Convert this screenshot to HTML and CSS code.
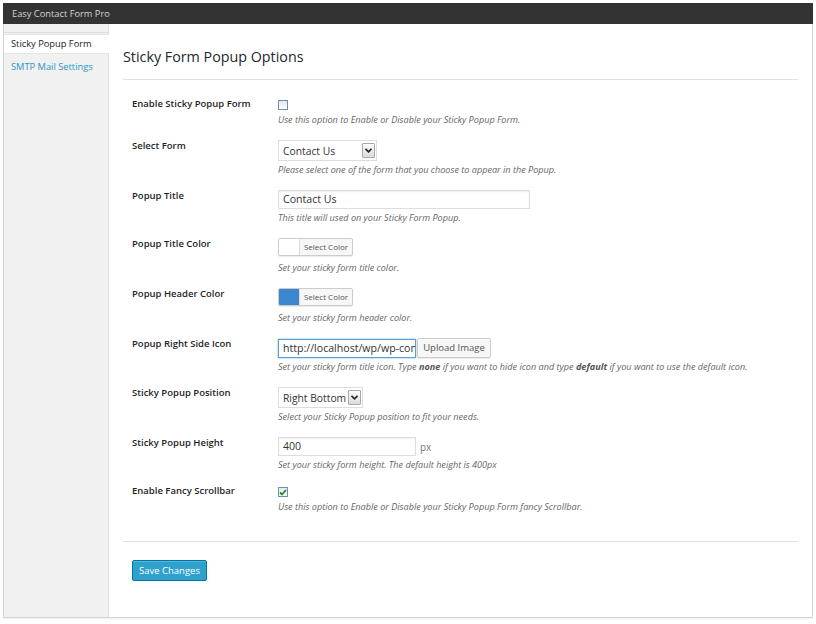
FILE: index.html
```html
<!DOCTYPE html>
<html>
<head>
<meta charset="utf-8">
<link rel="stylesheet" href="styles.css">
</head>
<body>
<div class="frame">
  <header class="topbar">Easy Contact Form Pro</header>
  <div class="layout">
    <nav class="sidebar">
      <div class="tab-spacer"></div>
      <a class="tab active">Sticky Popup Form</a>
      <a class="tab link">SMTP Mail Settings</a>
    </nav>
    <main class="content">
      <h1 class="title">Sticky Form Popup Options</h1>
      <hr class="rule rule-top">

      <div class="row">
        <div class="label">Enable Sticky Popup Form</div>
        <div class="field">
          <div class="check-wrap"><span class="checkbox"></span></div>
          <p class="desc desc-check">Use this option to Enable or Disable your Sticky Popup Form.</p>
        </div>
      </div>

      <div class="row">
        <div class="label">Select Form</div>
        <div class="field">
          <div class="select select-form"><span class="select-text">Contact Us</span><span class="select-arrow"><svg width="7" height="5" viewBox="0 0 7 5"><path d="M0.5 0.8 L3.5 3.8 L6.5 0.8" fill="none" stroke="#222" stroke-width="1.6"/></svg></span></div>
          <p class="desc desc-select">Please select one of the form that you choose to appear in the Popup.</p>
        </div>
      </div>

      <div class="row">
        <div class="label">Popup Title</div>
        <div class="field">
          <div class="input input-wide">Contact Us</div>
          <p class="desc">This title will used on your Sticky Form Popup.</p>
        </div>
      </div>

      <div class="row">
        <div class="label">Popup Title Color</div>
        <div class="field">
          <div class="colorpick"><span class="swatch swatch-white"></span><span class="colorpick-btn">Select Color</span></div>
          <p class="desc desc-color">Set your sticky form title color.</p>
        </div>
      </div>

      <div class="row">
        <div class="label">Popup Header Color</div>
        <div class="field">
          <div class="colorpick"><span class="swatch swatch-blue"></span><span class="colorpick-btn">Select Color</span></div>
          <p class="desc desc-color">Set your sticky form header color.</p>
        </div>
      </div>

      <div class="row">
        <div class="label">Popup Right Side Icon</div>
        <div class="field">
          <div class="inline">
            <div class="input input-mid focused">http://localhost/wp/wp-con</div>
            <span class="button">Upload Image</span>
          </div>
          <p class="desc">Set your sticky form title icon. Type <b>none</b> if you want to hide icon and type <b>default</b> if you want to use the default icon.</p>
        </div>
      </div>

      <div class="row">
        <div class="label">Sticky Popup Position</div>
        <div class="field">
          <div class="select select-pos"><span class="select-text">Right Bottom</span><span class="select-arrow"><svg width="7" height="5" viewBox="0 0 7 5"><path d="M0.5 0.8 L3.5 3.8 L6.5 0.8" fill="none" stroke="#222" stroke-width="1.6"/></svg></span></div>
          <p class="desc desc-select">Select your Sticky Popup position to fit your needs.</p>
        </div>
      </div>

      <div class="row">
        <div class="label">Sticky Popup Height</div>
        <div class="field">
          <div class="inline">
            <div class="input input-mid">400</div>
            <span class="unit">px</span>
          </div>
          <p class="desc">Set your sticky form height. The default height is 400px</p>
        </div>
      </div>

      <div class="row">
        <div class="label">Enable Fancy Scrollbar</div>
        <div class="field">
          <div class="check-wrap"><span class="checkbox checked"><svg width="8" height="7" viewBox="0 0 8 7"><path d="M1 3.5 L3 5.5 L7 1" fill="none" stroke="#1e8e1e" stroke-width="1.8"/></svg></span></div>
          <p class="desc desc-check">Use this option to Enable or Disable your Sticky Popup Form fancy Scrollbar.</p>
        </div>
      </div>

      <hr class="rule rule-bottom">
      <div class="actions"><span class="primary">Save Changes</span></div>
    </main>
  </div>
</div>
</body>
</html>
```

FILE: styles.css
```css
* { box-sizing: border-box; }
html, body { margin: 0; padding: 0; background: #fff; }
body { font-family: "Open Sans", "Liberation Sans", sans-serif; color: #222; }

.frame {
  margin: 3px;
  width: 810px;
  height: 615px;
  border: 1px solid #d4d4d4;
  border-top: none;
  display: flex;
  flex-direction: column;
  box-shadow: 0 1px 1px rgba(0,0,0,0.05);
}
.topbar {
  height: 21px;
  background: #333;
  color: #d4d4d4;
  font-size: 9.3px;
  line-height: 21px;
  padding-left: 9px;
  margin: 0 -1px;
}
.layout { flex: 1; display: flex; }
.sidebar {
  width: 105px;
  background: #f1f1f1;
  border-right: 1px solid #dcdcdc;
  display: flex;
  flex-direction: column;
}
.tab-spacer {
  height: 9px;
  border-bottom: 1px solid #dcdcdc;
  margin-bottom: 1px;
}
.tab {
  display: block;
  font-size: 9.3px;
  line-height: 19px;
  padding-left: 7px;
  color: #222;
}
.tab.active {
  background: #fff;
  margin-right: -1px;
  border-top: 1px solid #e5e5e5;
  border-bottom: 1px solid #e5e5e5;
  line-height: 18px;
}
.tab.link { color: #2a95c5; margin-top: 3px; }

.content { flex: 1; padding: 0 14px 0 14px; }
.title {
  margin: 23px 0 0 0;
  font-size: 14.3px;
  line-height: 19px;
  font-weight: 400;
  color: #23282d;
}
.rule { border: 0; border-top: 1px solid #e1e1e1; margin: 0; }
.rule-top { margin-top: 13px; margin-bottom: 18px; }
.rule-bottom { margin-top: 28px; margin-bottom: 18px; }

.row {
  display: grid;
  grid-template-columns: 146px 1fr;
  padding-left: 9px;
  margin-bottom: 14px;
}
.label {
  font-size: 9.5px;
  font-weight: 600;
  line-height: 12px;
  color: #1e1e1e;
}
.field { display: flex; flex-direction: column; align-items: flex-start; }
.desc {
  margin: 3px 0 0 0;
  font-size: 9.1px;
  line-height: 12px;
  font-style: italic;
  color: #666;
}
.desc b { font-weight: 700; color: #555; }
.desc-check { margin-top: 4px; }
.desc-select { margin-top: 3px; }
.desc-color { margin-top: 6px; }

.check-wrap { height: 12px; padding-top: 2px; }
.checkbox {
  display: flex;
  align-items: center;
  justify-content: center;
  width: 10px;
  height: 10px;
  border: 1px solid #6d8fb8;
  background: linear-gradient(#e8e8e8, #fbfbfb);
}

.select {
  display: flex;
  align-items: center;
  justify-content: space-between;
  height: 21px;
  border: 1px solid #ddd;
  background: #fff;
  padding: 0 1px 0 4px;
  font-size: 10.3px;
  color: #333;
  white-space: nowrap;
}
.select-form { width: 99px; }
.select-pos { width: 85px; }
.select-arrow {
  flex: none;
  display: flex;
  align-items: center;
  justify-content: center;
  width: 13px;
  height: 15px;
  margin-left: 2px;
  border: 1px solid #a8a8a8;
  border-radius: 1px;
  background: linear-gradient(#fdfdfd, #dcdcdc);
}

.input {
  height: 19px;
  border: 1px solid #ddd;
  box-shadow: inset 0 1px 2px rgba(0,0,0,0.07);
  font-size: 10.6px;
  line-height: 17px;
  padding-left: 4px;
  color: #333;
  white-space: nowrap;
  overflow: hidden;
}
.input-wide { width: 252px; }
.input-mid { width: 138px; }
.input.focused { border-color: #5b9dd9; box-shadow: 0 0 2px rgba(30,140,190,0.6); }
.inline { display: flex; align-items: center; }
.button {
  margin-left: 1px;
  height: 20px;
  width: 74px;
  border: 1px solid #ccc;
  border-radius: 2px;
  background: #f7f7f7;
  box-shadow: inset 0 1px 0 #fff, 0 1px 0 rgba(0,0,0,0.08);
  font-size: 9.5px;
  line-height: 18px;
  text-align: center;
  color: #555;
}
.unit { margin-left: 4px; font-size: 10px; color: #777; }

.colorpick {
  display: flex;
  height: 18px;
  width: 75px;
  border: 1px solid #ccc;
  border-radius: 2px;
  background: #f7f7f7;
  box-shadow: 0 1px 0 rgba(0,0,0,0.08);
  overflow: hidden;
}
.swatch { width: 21px; border-right: 1px solid #ddd; }
.swatch-white { background: #fff; }
.swatch-blue { background: #3b86cc; }
.colorpick-btn {
  flex: 1;
  font-size: 8px;
  line-height: 16px;
  text-align: center;
  color: #555;
}

.actions { display: flex; padding-left: 9px; }
.primary {
  display: block;
  width: 75px;
  height: 21px;
  background: #2ea2cc;
  border: 1px solid #0074a2;
  border-radius: 2px;
  box-shadow: inset 0 1px 0 rgba(120,200,230,0.5);
  color: #fff;
  font-size: 9.5px;
  line-height: 19px;
  text-align: center;
}
```
